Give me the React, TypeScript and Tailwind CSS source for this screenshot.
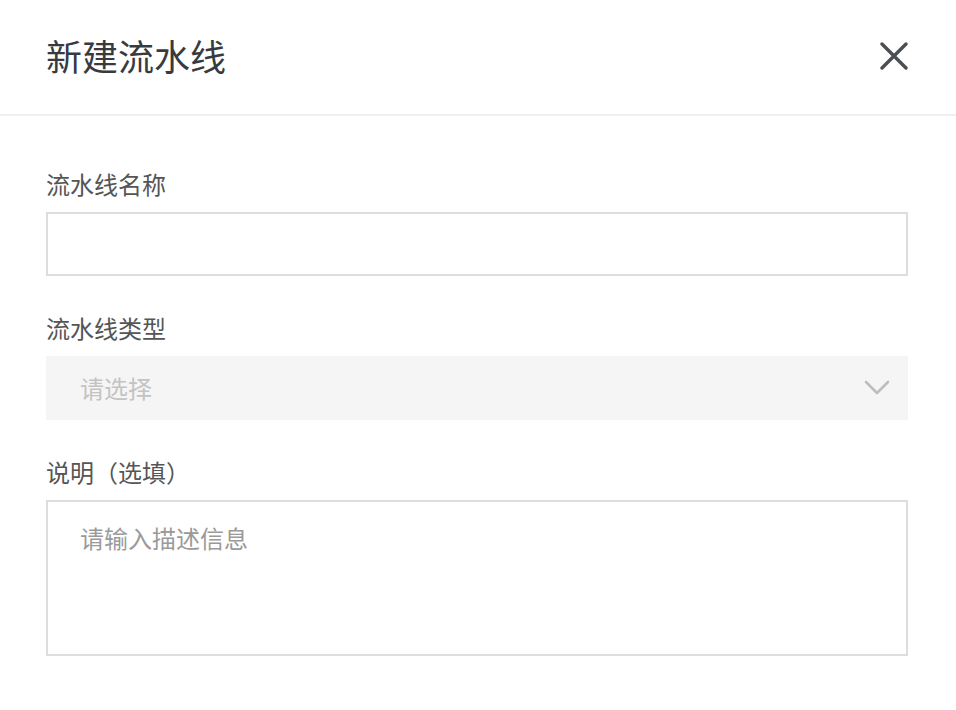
const font = { fontFamily: '"Noto Sans CJK SC", "Noto Sans", sans-serif' };

const CloseIcon = () => (
  <svg width="28" height="28" viewBox="0 0 28 28" fill="none">
    <path d="M2 2 L26 26 M26 2 L2 26" stroke="#4b4e53" strokeWidth="3.4" strokeLinecap="round" />
  </svg>
);

const ChevronIcon = () => (
  <svg width="26" height="16" viewBox="0 0 26 16" fill="none">
    <path d="M2 2 L13 13 L24 2" stroke="#bdbdbd" strokeWidth="2.6" strokeLinecap="round" strokeLinejoin="round" />
  </svg>
);

const FieldLabel = (props: { text: string; first?: boolean }) => (
  <div className={`h-[36px] leading-[36px] text-[24px] text-[#555555] mb-[10px] ${props.first ? '' : 'mt-[34px]'}`}>
    {props.text}
  </div>
);

const App = () => {
  return (
    <div className="w-[956px] h-[710px] bg-white" style={font}>
      <div className="h-[116px] border-b-2 border-[#efefef] flex items-center justify-between pl-[46px] pr-[48px]">
        <h1 className="text-[36px] leading-[48px] text-[#373a3f] font-normal -mt-[5px]">新建流水线</h1>
        <button className="w-[28px] h-[28px] flex items-center justify-center -mt-[3px]">
          <CloseIcon />
        </button>
      </div>

      <div className="pl-[46px] pr-[48px] pt-[50px]">
        <FieldLabel text="流水线名称" first />
        <input
          className="block w-full h-[64px] border-2 border-[#dddddd] outline-none px-[32px] text-[24px] text-[#333333]"
        />

        <FieldLabel text="流水线类型" />
        <div className="w-full h-[64px] bg-[#f5f5f5] flex items-center justify-between pl-[34px] pr-[18px]">
          <span className="text-[24px] text-[#c3c3c3] leading-[36px]">请选择</span>
          <ChevronIcon />
        </div>

        <FieldLabel text="说明（选填）" />
        <textarea
          placeholder="请输入描述信息"
          className="block w-full h-[156px] border-2 border-[#dddddd] outline-none resize-none pl-[32px] pr-[32px] pt-[18px] text-[24px] leading-[36px] text-[#333333] placeholder:text-[#9a9a9a]"
        />
      </div>
    </div>
  );
};

export default App;
